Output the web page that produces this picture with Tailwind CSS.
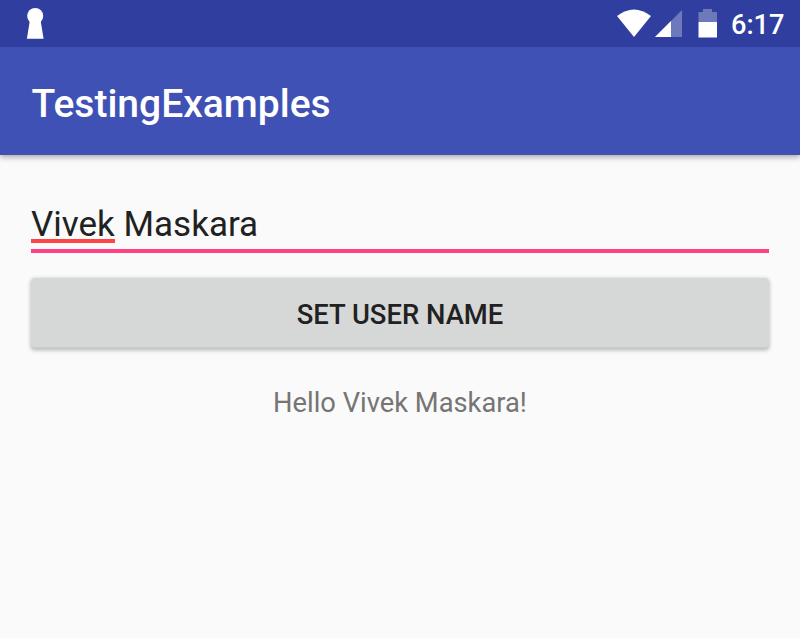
<!DOCTYPE html>
<html lang="en"><head><meta charset="utf-8"><title>TestingExamples</title>
<script src="https://cdn.jsdelivr.net/npm/@tailwindcss/browser@4"></script></head>
<body class="bg-[#fafafa] font-[Roboto,sans-serif] w-[800px] h-[638px] overflow-hidden">
<header class="shadow-[0_2px_6px_rgba(0,0,0,0.35)] bg-[#3f51b5] text-white">
<div class="flex h-[47px] items-center bg-[#303f9f] pl-[26px] pr-4">
<svg class="h-[47px] w-[20px]" viewBox="26 0 20 47" fill="#fff"><circle cx="35.200" cy="16" r="8"/><path d="M30 19.500h10.400L43.600 38.800H26.900z"/></svg>
<svg class="ml-auto h-[47px] w-[105px]" viewBox="614 0 105 47"><path d="M617 16Q634 3 651 16L634 37z" fill="#fff"/><path d="M655 37L682 10V37z" fill="#fff" fill-opacity=".3"/><path d="M655 37L671 21V37z" fill="#fff"/><path d="M698.500 12h4.500V9h9v3h5v10h-18.500z" fill="#fff" fill-opacity=".3"/><path d="M698.500 22H717v15.500h-18.500z" fill="#fff"/></svg>
<span class="ml-[12px] w-[53px] pt-[4px] text-[27.2px] font-medium leading-[43px]">6:17</span>
</div>
<div class="flex h-[108px] items-center px-[31.500px] pt-[6px]"><h1 class="text-[39px] font-medium leading-none">TestingExamples</h1></div>
</header>
<main class="px-[31px] pt-[47px]">
<div class="h-[51px] border-b-4 border-[#ff4081] text-[35px] leading-[44px] text-[#212121]"><span class="inline-block h-[41px] border-b-4 border-[#ff4444] leading-[45px]">Vivek</span> Maskara</div>
<button class="mt-[25px] block h-[71px] w-full rounded-[4px] border-b-2 border-[#c9caca] bg-[#d6d7d7] pt-[6px] text-[27.4px] font-medium text-[#212121] shadow-[0_1px_4px_rgba(0,0,0,0.3)]">SET USER NAME</button>
<p class="mt-[38px] text-center text-[27.3px] leading-8 text-[#757575]">Hello Vivek Maskara!</p>
</main></body></html>
